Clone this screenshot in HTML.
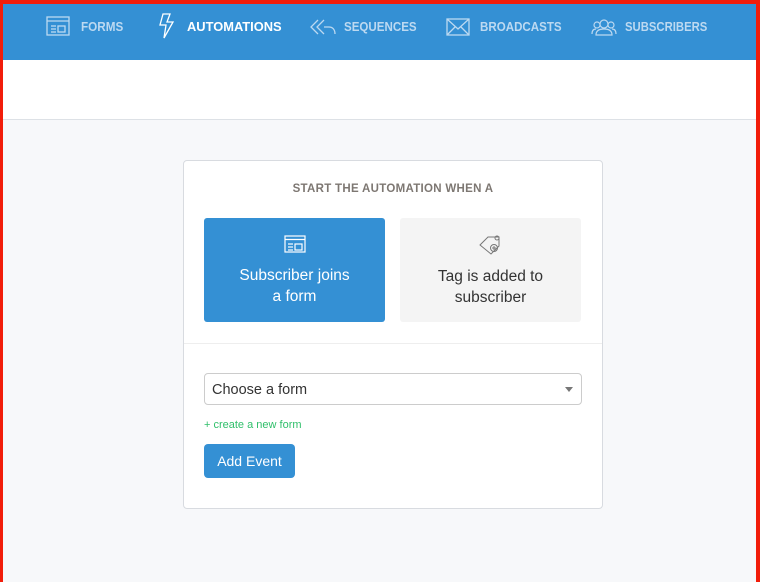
<!DOCTYPE html><html><head><style>
body{margin:0;width:760px;height:582px;overflow:hidden;font-family:"Liberation Sans",sans-serif;background:#f7f8fa;position:relative}
.rl{position:absolute;background:#f21d0a}
.hdr{position:absolute;left:0;top:0;width:760px;height:60px;background:#3490d4}
.ic{position:absolute}
.lb{position:absolute;top:19px;font-weight:bold;font-size:13px;color:#bcd9f1;transform-origin:0 0;white-space:nowrap}
.lb.a{color:#fff}
.white{position:absolute;left:0;top:60px;width:760px;height:59px;background:#fff;border-bottom:1px solid #dde1e6}
.card{position:absolute;left:183px;top:160px;width:418px;height:347px;background:#fff;border:1px solid #d8dbe0;border-radius:4px}
.t{position:absolute;top:22px;width:100%;text-align:center;font-size:11.5px;font-weight:bold;color:#7d7772;letter-spacing:.3px}
.opt{position:absolute;top:57px;width:181px;height:104px;border-radius:3px;text-align:center;font-size:15.5px;line-height:21px}
.sel{position:absolute;left:20px;top:212px;height:32px;border:1px solid #ccc;border-radius:4px;font-size:14.5px;color:#333;line-height:32px;padding-left:7px;box-sizing:border-box;width:378px}
</style></head><body>
<div class="hdr"></div>
<svg class="ic" style="left:46px;top:16px" width="24" height="20" viewBox="0 0 24 20" fill="none" stroke="#bcd9f1" stroke-width="1.3"><rect x="1" y="1" width="22" height="18"/><line x1="1" y1="5" x2="23" y2="5"/><line x1="5" y1="10" x2="10" y2="10"/><line x1="5" y1="13" x2="10" y2="13"/><line x1="5" y1="16" x2="10" y2="16"/><rect x="12" y="10" width="7" height="6"/></svg>
<div class="lb" style="left:81px;transform:scaleX(.9)">FORMS</div>
<svg class="ic" style="left:159px;top:13px" width="16" height="26" viewBox="0 0 16 26" fill="none" stroke="#fff" stroke-width="1.3"><path d="M4 1L1 12h6L5 25 14 9H8L11 1z"/></svg>
<div class="lb a" style="left:187px;transform:scaleX(.99)">AUTOMATIONS</div>
<svg class="ic" style="left:310px;top:18px" width="26" height="18" viewBox="0 0 26 18" fill="none" stroke="#bcd9f1" stroke-width="1.3"><path d="M8 2L1 9l7 7M14 2L7 9l7 7M14 9h5c4 0 6 3 6 7"/></svg>
<div class="lb" style="left:344px;transform:scaleX(.89)">SEQUENCES</div>
<svg class="ic" style="left:446px;top:18px" width="24" height="18" viewBox="0 0 24 18" fill="none" stroke="#bcd9f1" stroke-width="1.3"><rect x="1" y="1" width="22" height="16"/><path d="M1 1l11 10L23 1M1 17l8-8M23 17l-8-8"/></svg>
<div class="lb" style="left:480px;transform:scaleX(.89)">BROADCASTS</div>
<svg class="ic" style="left:591px;top:18px" width="26" height="18" viewBox="0 0 26 18" fill="none" stroke="#bcd9f1" stroke-width="1.2"><circle cx="13" cy="6" r="4"/><path d="M5 17c0-5 4-6 8-6s8 1 8 6z"/><circle cx="6" cy="7" r="3"/><circle cx="20" cy="7" r="3"/><path d="M1 16c0-4 2-5 4-5M25 16c0-4-2-5-4-5"/></svg>
<div class="lb" style="left:625px;transform:scaleX(.87)">SUBSCRIBERS</div>
<div class="white"></div>
<div class="card">
<div class="t">START THE AUTOMATION WHEN A</div>
<div class="opt" style="left:20px;background:#3490d4;color:#fff"><svg style="margin-top:17px" width="22" height="18" viewBox="0 0 22 18" fill="none" stroke="#fff" stroke-width="1.2"><rect x="1" y="1" width="20" height="16"/><line x1="1" y1="4.5" x2="21" y2="4.5"/><line x1="4" y1="9" x2="9" y2="9"/><line x1="4" y1="12" x2="9" y2="12"/><line x1="4" y1="15" x2="9" y2="15"/><rect x="11" y="9" width="7" height="6"/></svg><div style="margin-top:6px">Subscriber joins<br>a form</div></div>
<div class="opt" style="left:216px;background:#f4f4f4;color:#333"><svg style="margin-top:15px" width="24" height="22" viewBox="0 0 24 22" fill="none" stroke="#777" stroke-width="1"><path d="M1 12L9 4h11v9l-8 8z"/><circle cx="18" cy="5" r="2"/><circle cx="15" cy="15" r="3.5"/><path d="M15 13v4M13 15h4"/></svg><div style="margin-top:5px">Tag is added to<br>subscriber</div></div>
<div style="position:absolute;left:0;top:182px;width:100%;border-top:1px solid #eee"></div>
<div class="sel">Choose a form<span style="position:absolute;right:8px;top:13px;border:4px solid transparent;border-top:5px solid #777;border-bottom:0"></span></div>
<div style="position:absolute;left:20px;top:258px;font-size:11px;color:#2fbf6a">+ create a new form</div>
<div style="position:absolute;left:20px;top:283px;width:91px;height:34px;background:#3490d4;border-radius:4px;color:#fff;font-size:14px;text-align:center;line-height:34px">Add Event</div>
</div>
<div class="rl" style="left:0;top:0;width:760px;height:4px"></div>
<div class="rl" style="left:0;top:0;width:3px;height:582px"></div>
<div class="rl" style="left:756px;top:0;width:4px;height:582px"></div>
</body></html>
